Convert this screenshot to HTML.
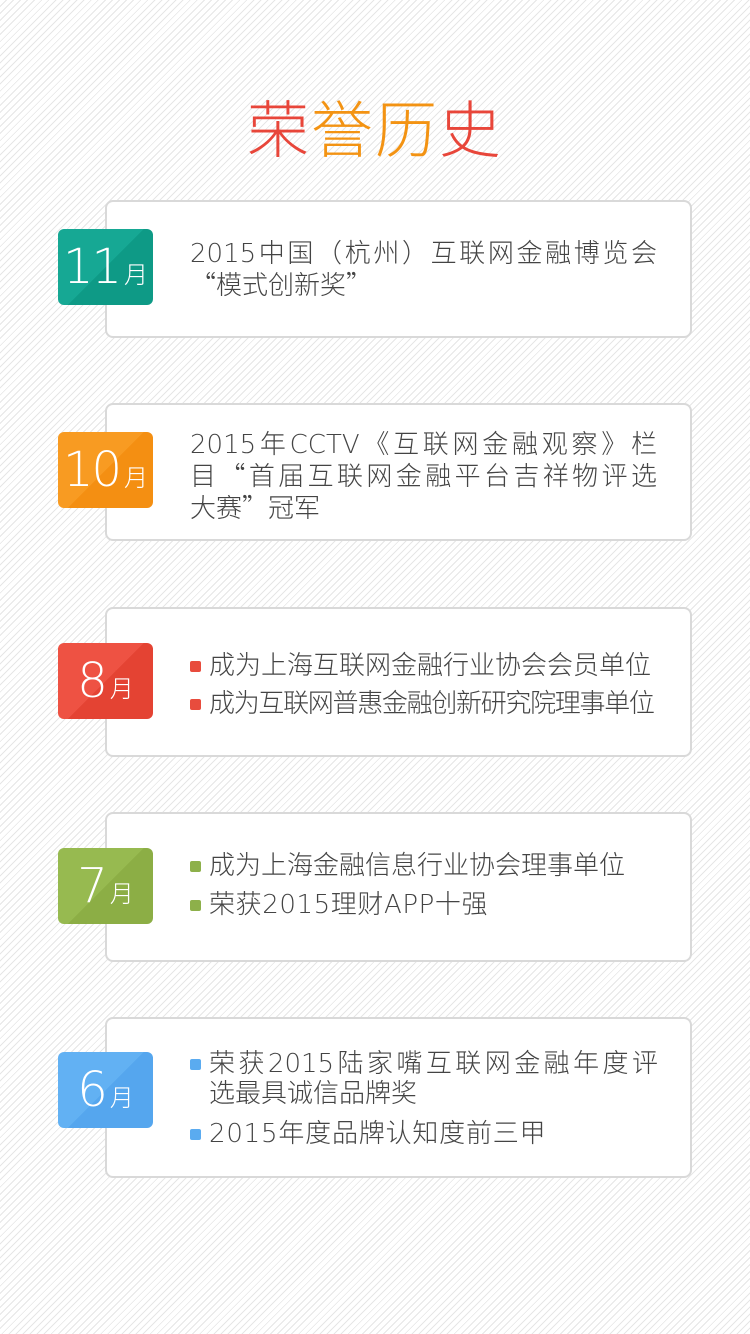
<!DOCTYPE html>
<html><head><meta charset="utf-8"><style>
*{margin:0;padding:0;box-sizing:border-box}
body{width:750px;height:1334px;position:relative;overflow:hidden;font-family:"DejaVu Sans","Noto Sans CJK SC",sans-serif;
background:#fff repeating-linear-gradient(135deg,#fff 0 4px,#e6e6e6 4px 5px);}
.title{position:absolute;top:88px;left:0;width:750px;text-align:center;font-size:62px;line-height:74px;letter-spacing:2px;font-family:"Noto Sans CJK SC",sans-serif;font-weight:300}
.card{position:absolute;left:105px;width:587px;background:#fff;border:2px solid #d9d9d9;border-radius:8px}
.badge{position:absolute;left:58px;width:95px;height:76px;border-radius:6px;color:#fff;text-align:center;line-height:76px;font-size:48px;font-family:"DejaVu Sans",sans-serif;font-weight:200;letter-spacing:-2px}
.badge small{font-size:24px;margin-left:4px;font-family:"Noto Sans CJK SC",sans-serif;letter-spacing:0}
.txt{position:absolute;left:190px;font-size:26px;line-height:30px;color:#444;font-weight:300}
.j{display:block;text-align:justify;text-align-last:justify;white-space:nowrap}
.c{font-family:"Noto Sans CJK SC",sans-serif}
.li{position:relative;padding-left:19px;line-height:30px}
.li:before{content:"";position:absolute;left:0;top:10px;width:11px;height:11px;border-radius:2px;background:var(--c)}
</style></head><body>
<div class="title"><span style="color:#e8463a">荣</span><span style="color:#f39313">誉</span><span style="color:#f39313">历</span><span style="color:#e8463a">史</span></div>

<div class="card" style="top:200px;height:138px"></div>
<div class="badge" style="top:229px;background:linear-gradient(135deg,#16a894 50%,#0e9a86 50%)">11<small>月</small></div>
<div class="txt" style="top:237px;width:467px"><span class="j">2015中国<span class="c">（</span>杭州<span class="c">）</span>互联网金融博览会</span><span class="c">“</span>模式创新奖<span class="c">”</span></div>

<div class="card" style="top:403px;height:138px"></div>
<div class="badge" style="top:432px;background:linear-gradient(135deg,#f89b22 50%,#f48f12 50%)">10<small>月</small></div>
<div class="txt" style="top:428px;width:467px"><span class="j">2015年CCTV<span class="c">《</span>互联网金融观察<span class="c">》</span>栏</span><span class="j">目<span class="c">“</span>首届互联网金融平台吉祥物评选</span>大赛<span class="c">”</span>冠军</div>

<div class="card" style="top:607px;height:150px"></div>
<div class="badge" style="top:643px;background:linear-gradient(135deg,#ee5243 50%,#e44333 50%)">8<small>月</small></div>
<div class="txt" style="top:651px;--c:#e84c3d"><div class="li">成为上海互联网金融行业协会会员单位</div><div class="li" style="margin-top:8px;letter-spacing:-1.3px">成为互联网普惠金融创新研究院理事单位</div></div>

<div class="card" style="top:812px;height:150px"></div>
<div class="badge" style="top:848px;background:linear-gradient(135deg,#97ba50 50%,#8cae45 50%)">7<small>月</small></div>
<div class="txt" style="top:851px;--c:#8db04a"><div class="li">成为上海金融信息行业协会理事单位</div><div class="li" style="margin-top:9px;letter-spacing:0.6px">荣获2015理财APP十强</div></div>

<div class="card" style="top:1017px;height:161px"></div>
<div class="badge" style="top:1052px;background:linear-gradient(135deg,#62b1f3 50%,#55a6ee 50%)">6<small>月</small></div>
<div class="txt" style="top:1049px;--c:#5aabf0;width:468px"><div class="li"><span class="j">荣获2015陆家嘴互联网金融年度评</span>选最具诚信品牌奖</div><div class="li" style="margin-top:10px;letter-spacing:0.8px">2015年度品牌认知度前三甲</div></div>
</body></html>
